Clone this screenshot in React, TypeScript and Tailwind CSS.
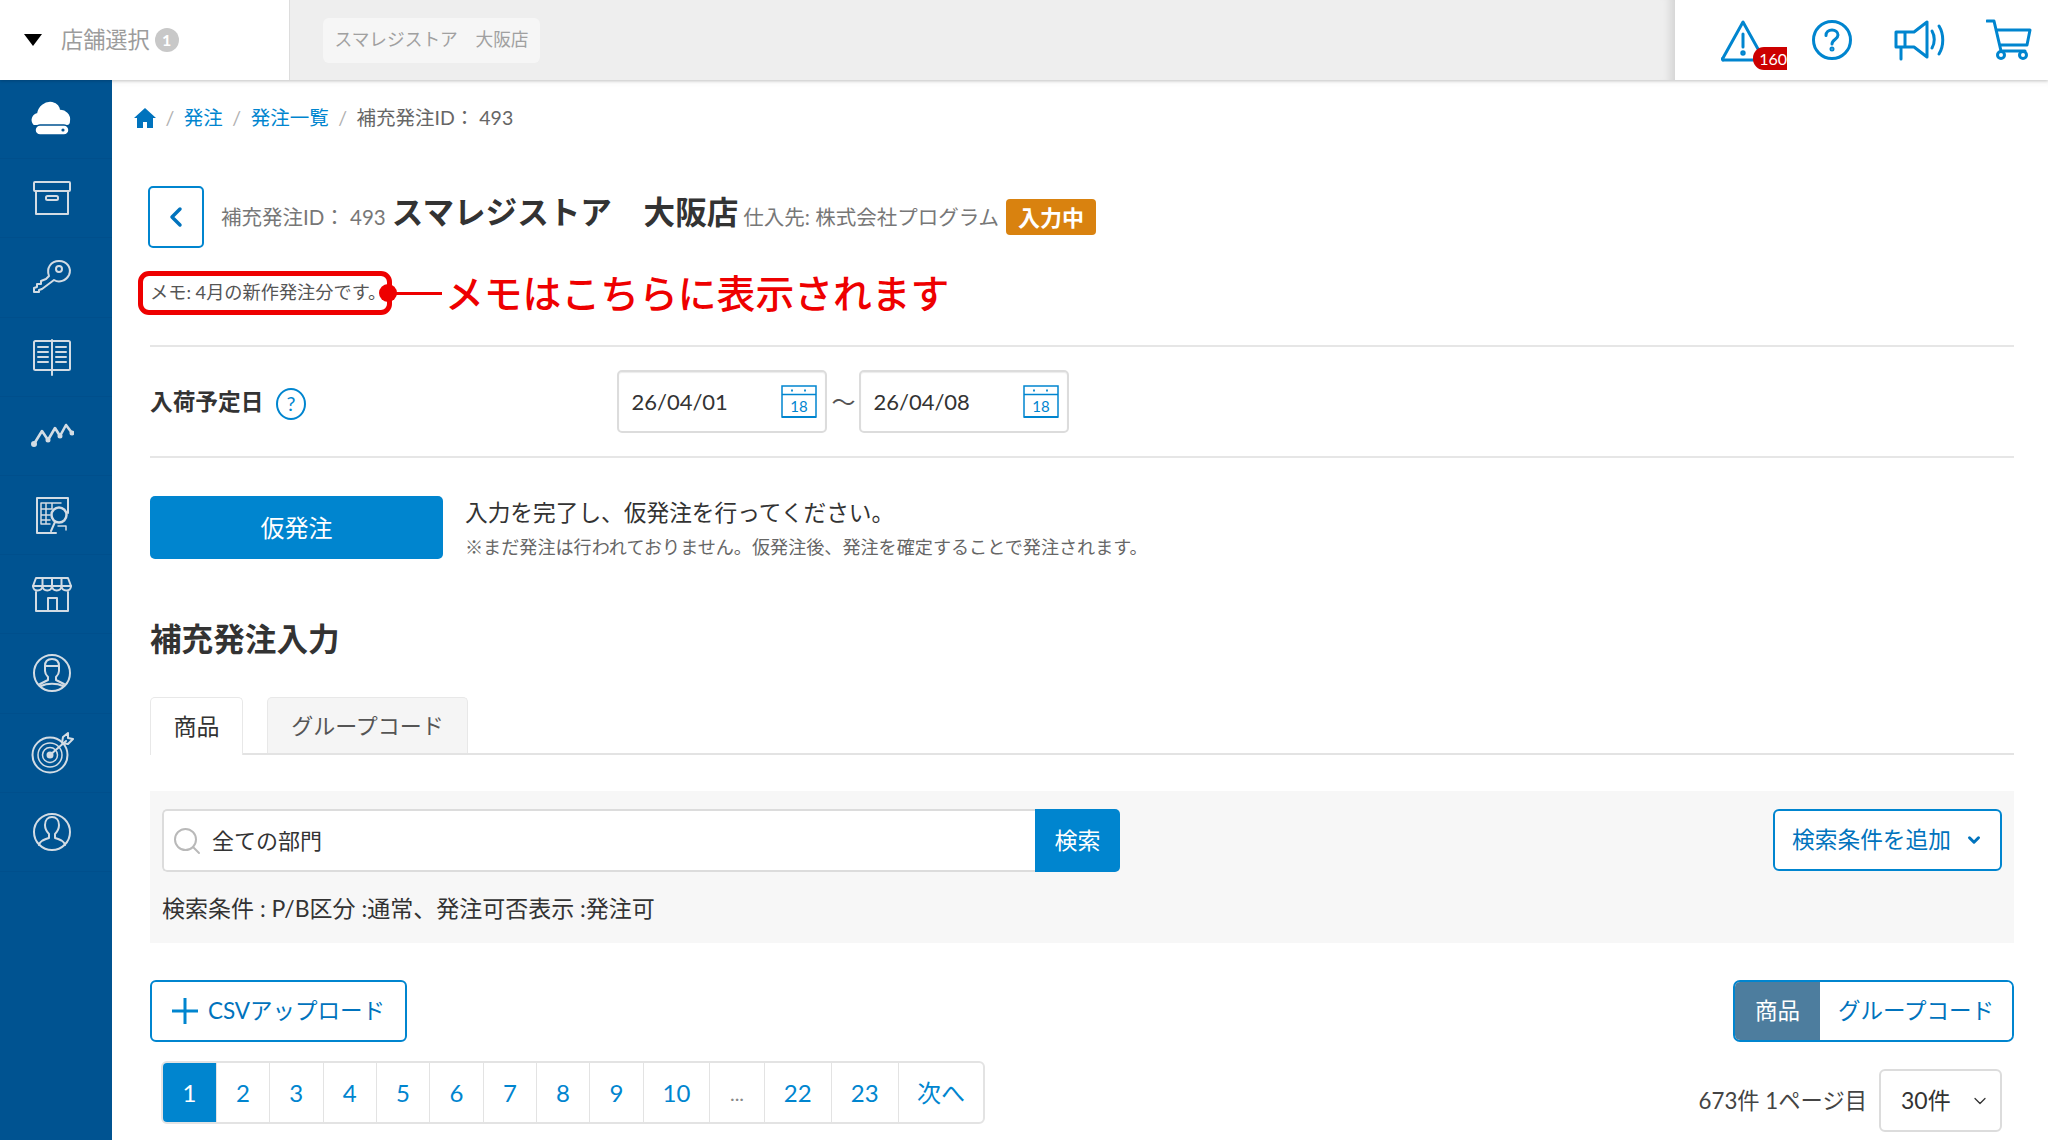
import { ChevronDown } from 'lucide-react'

const FONT = "font-['Lato','Noto_Sans_CJK_JP',sans-serif]"

const NAV_STROKE = '#d3dce4'

function NavIcon({ children }: { children: React.ReactNode }) {
  return (
    <div className="flex h-[79.2px] items-center justify-center border-b border-[#004f8c] pr-[8px]">
      <svg width="44" height="44" viewBox="0 0 44 44" fill="none" stroke={NAV_STROKE} strokeWidth="2" strokeLinejoin="round" strokeLinecap="round">
        {children}
      </svg>
    </div>
  )
}

const NAV_ICONS = [
  <>
    <path d="M4 27c-3-4-1-9 4-10 1-7 7-12 14-11 4 1 7 4 7 8 6-1 11 4 10 10 0 2-1 3-2 3z" fill="#fff" stroke="#fff" />
    <rect x="5" y="28" width="34" height="10" rx="5" fill="#fff" stroke="#005391" strokeWidth="1.5" />
    <circle cx="33" cy="33" r="1.6" fill="#005391" stroke="none" />
  </>,
  <>
    <rect x="4" y="6" width="36" height="9" rx="1" />
    <rect x="6" y="15" width="32" height="23" />
    <rect x="16" y="20" width="12" height="4" rx="1.5" />
  </>,
  <>
    <path d="M19 22c-3-8 2-15 10-15s13 7 10 14c-3 6-10 8-15 5L12 35l-3 1 0 2-5 0 0-4 3-1 0-3 4 0 0-3 5-2z" transform="translate(0 -1)" />
    <circle cx="29" cy="14" r="3" />
  </>,
  <>
    <rect x="4" y="6" width="36" height="29" rx="1.5" />
    <path d="M22 5v35M8 12h10M8 17h10M8 22h10M8 27h10M26 12h10M26 17h10M26 22h10M26 27h10" />
  </>,
  <>
    <path d="M4 30l8-13 6 9 7-12 5 8 6-11 6 8" strokeWidth="2.6" />
    <circle cx="4" cy="30" r="2" fill={NAV_STROKE} />
    <circle cx="18" cy="26" r="1.5" fill={NAV_STROKE} />
    <circle cx="30" cy="22" r="1.5" fill={NAV_STROKE} />
    <circle cx="42" cy="19" r="1.5" fill={NAV_STROKE} />
  </>,
  <>
    <path d="M26 40H7V5h31v15" />
    <path d="M11 10h20M11 10v21h9M16 10v21M22 10v6M11 16h11M11 22h9M11 27h9M28 33h8v4" strokeWidth="1.5" />
    <circle cx="29" cy="22" r="7.5" fill="#005391" strokeWidth="2.5" />
    <path d="M25 29l-4 9" />
  </>,
  <>
    <path d="M6 6h32l3 8H3z" />
    <path d="M3 14c0 6 9 6 9.500 0 .5 6 9 6 9.500 0 .5 6 9 6 9.500 0 .5 6 9.500 6 9.500 0M12.500 6v8M22 6v8M31.500 6v8" />
    <path d="M6 20v19h32V20M18 39V26h9v13" />
  </>,
  <>
    <circle cx="22" cy="22" r="18" />
    <path d="M15 15c0-5 3-7 7-7s7 2 7 7v5c0 3-2 5-3 6v3l8 4M15 15v5c0 3 2 5 3 6v3l-8 4M15 15h14M11 35c6-3 16-3 22 0" />
  </>,
  <>
    <circle cx="20" cy="24" r="17.500" />
    <circle cx="20" cy="24" r="12" strokeWidth="1.500" />
    <circle cx="20" cy="24" r="7.500" strokeWidth="1.500" />
    <circle cx="20" cy="24" r="2.500" fill={NAV_STROKE} />
    <path d="M20 24L36 10M33 6l-1 6 6 1 5-5-5-1 0-5z" />
  </>,
  <>
    <circle cx="22" cy="22" r="18" />
    <path d="M9 35c1-4 4-5 10-7v-4c-2-2-4-5-4-9 0-5 3-8 7-8s7 3 7 8c0 4-2 7-4 9v4c6 2 9 3 10 7" />
  </>,
]

function CalendarIcon() {
  return (
    <svg width="36" height="33" viewBox="0 0 36 33" fill="none" stroke="#0085cf" strokeWidth="1.5">
      <rect x="1" y="1" width="34" height="31" />
      <path d="M1 9.500h34" />
      <path d="M1 32h34" strokeWidth="2" />
      <path d="M11 4.500v2M24 4.500v2" strokeWidth="1.800" />
      <text x="18" y="27" textAnchor="middle" fill="#0085cf" stroke="none" fontSize="15" fontFamily="Lato, sans-serif">18</text>
    </svg>
  )
}

function DateInput({ value }: { value: string }) {
  return (
    <div className="flex h-[63px] w-[210px] items-center justify-between rounded-[5px] border-2 border-[#dcdcdc] bg-white pl-[12px] pr-[8px] text-[22px] text-[#333] shadow-[inset_0_1px_1px_rgba(0,0,0,0.08)]">
      <span>{value}</span>
      <CalendarIcon />
    </div>
  )
}

const PAGES = [
  { label: '1', w: 53, active: true },
  { label: '2', w: 53 },
  { label: '3', w: 53.5 },
  { label: '4', w: 53.5 },
  { label: '5', w: 53 },
  { label: '6', w: 54 },
  { label: '7', w: 53 },
  { label: '8', w: 53 },
  { label: '9', w: 54 },
  { label: '10', w: 66 },
  { label: '...', w: 55, muted: true },
  { label: '22', w: 66.5 },
  { label: '23', w: 67.5 },
  { label: '次へ', w: 85 },
]

export default function App() {
  return (
    <div className={`flex h-[1140px] w-[2048px] flex-col overflow-hidden bg-white text-[#333] ${FONT}`}>
      <header className="relative z-10 flex h-[80px] shrink-0 shadow-[0_1px_3px_rgba(0,0,0,0.2)]">
        <div className="flex w-[290px] items-center border-r border-[#ddd] bg-white pl-[24px]">
          <span className="h-0 w-0 border-x-[9px] border-t-[12px] border-x-transparent border-t-black" />
          <span className="ml-[19px] text-[22.2px] text-[#9c9c9c]">店舗選択</span>
          <span className="ml-[5px] flex h-[24px] w-[24px] items-center justify-center rounded-full bg-[#c8c8c8] text-[16px] font-bold text-white">1</span>
        </div>
        <div className="flex flex-1 items-center bg-[#eeeeee] pl-[33px] shadow-[inset_-12px_0_10px_-8px_rgba(0,0,0,0.12)]">
          <div className="flex h-[45px] w-[217px] items-center justify-center rounded-[6px] bg-[#f6f6f6] text-[17.7px] text-[#a0a0a0]">
            スマレジストア　大阪店
          </div>
        </div>
        <div className="flex w-[373px] items-center bg-white pl-[46px]">
          <div className="relative h-[52px] w-[68px]">
            <svg width="44" height="44" viewBox="0 0 44 44" fill="none" stroke="#0085cf" strokeWidth="3" strokeLinejoin="round" strokeLinecap="round" className="mt-[5px]">
              <path d="M22 3L2 39a1 1 0 0 0 1 2h38a1 1 0 0 0 1-2z" />
              <path d="M22 15v13" />
              <circle cx="22" cy="34" r="1.2" />
            </svg>
            <span className="absolute left-[32px] top-[33px] flex h-[23px] w-[34px] items-center justify-end rounded-l-[11px] bg-[#cc0000] text-[16px] leading-none text-white">160</span>
          </div>
          <svg width="40" height="40" viewBox="0 0 40 40" fill="none" stroke="#0085cf" strokeWidth="3" strokeLinecap="round" className="ml-[23px]">
            <circle cx="20" cy="20" r="18.5" />
            <path d="M14 15.500c0-3.500 2.700-5.500 6-5.500s6 2 6 5c0 4.500-6 4.500-6 9" />
            <circle cx="20" cy="29" r="1" />
          </svg>
          <svg width="54" height="42" viewBox="0 0 54 42" fill="none" stroke="#0085cf" strokeWidth="3" strokeLinejoin="round" strokeLinecap="round" className="ml-[42px]">
            <path d="M2 13h18l13-10v35L20 28H2zM11 13v15M7 28v12" />
            <path d="M38 12c3 5 3 12 0 17M45 7c5 8 5 20 0 28" />
          </svg>
          <svg width="46" height="42" viewBox="0 0 46 42" fill="none" stroke="#0085cf" strokeWidth="3" strokeLinejoin="round" strokeLinecap="round" className="ml-[38px]">
            <path d="M1 2h7l7 30h24M10 11h34l-3 15H14" />
            <circle cx="15" cy="36" r="3.5" />
            <circle cx="37" cy="36" r="3.5" />
          </svg>
        </div>
      </header>

      <div className="flex min-h-0 flex-1">
        <nav className="w-[112px] shrink-0 bg-[#005391]">
          {NAV_ICONS.map((icon, i) => (
            <NavIcon key={i}>{icon}</NavIcon>
          ))}
        </nav>

        <main className="min-w-0 flex-1 pl-[38px] pr-[34px] shadow-[inset_0_8px_8px_-8px_rgba(0,0,0,0.08)]">
          <div className="-ml-[16px] mt-[26px] flex h-[24px] items-center gap-[9.5px] text-[19.5px]">
            <svg width="22" height="20" viewBox="0 0 22 20" fill="#0073bd"><path d="M11 0L0 10h3v10h6v-6h4v6h6V10h3z" /></svg>
            <span className="text-[#b0b0b0]">/</span>
            <span className="text-[#0085cf]">発注</span>
            <span className="text-[#b0b0b0]">/</span>
            <span className="text-[#0085cf]">発注一覧</span>
            <span className="text-[#b0b0b0]">/</span>
            <span className="text-[#666]">補充発注ID： 493</span>
          </div>

          <div className="-ml-[2px] mt-[56px] flex h-[62px] items-center">
            <button className="flex h-[62px] w-[56px] items-center justify-center rounded-[5px] border-2 border-[#0085cf] bg-white text-[#0073bd]">
              <svg width="14" height="22" viewBox="0 0 14 22" fill="none" stroke="currentColor" strokeWidth="3.5" strokeLinecap="round" strokeLinejoin="round"><path d="M11 3L3 11l8 8" /></svg>
            </button>
            <span className="ml-[17px] text-[20.5px] text-[#777]">補充発注ID： 493</span>
            <span className="-mt-[8px] ml-[6px] text-[31.6px] font-bold text-[#333]">スマレジストア　大阪店</span>
            <span className="ml-[5px] text-[20.5px] text-[#777]">仕入先: 株式会社プログラム</span>
            <span className="ml-[7px] flex h-[36px] w-[90px] items-center justify-center rounded-[4px] bg-[#d9820f] text-[22px] font-bold text-white">入力中</span>
          </div>

          <div className="relative -ml-[12px] mt-[23px] flex h-[44px] items-center">
            <div className="flex h-[44px] w-[254px] items-center rounded-[11px] border-[5px] border-[#ee0000] pl-[7px] text-[18.2px] text-[#555]">
              <span className="whitespace-nowrap">メモ: 4月の新作発注分です。</span>
            </div>
            <span className="absolute left-[241px] top-[13px] h-[18px] w-[18px] rounded-full bg-[#ee0000]" />
            <span className="h-[3px] w-[50px] bg-[#ee0000]" />
            <span className="ml-[3px] text-[38.8px] font-medium leading-none text-[#ee0000]">メモはこちらに表示されます</span>
          </div>

          <div className="mt-[30px] flex h-[113px] items-center border-y-2 border-[#e6e6e6]">
            <span className="mt-[1px] text-[22.7px] font-bold text-[#333]">入荷予定日</span>
            <svg width="30" height="32" viewBox="0 0 30 32" fill="none" stroke="#0085cf" strokeWidth="2" className="ml-[13px] mt-[4px]">
              <ellipse cx="15" cy="16" rx="14" ry="15" />
              <text x="15" y="23" textAnchor="middle" fill="#0085cf" stroke="none" fontSize="20" fontFamily="Lato, sans-serif">?</text>
            </svg>
            <div className="ml-[311px] flex items-center gap-[4px]">
              <DateInput value="26/04/01" />
              <span className="w-[24px] text-center text-[24px] text-[#555]">～</span>
              <DateInput value="26/04/08" />
            </div>
          </div>

          <div className="mt-[38px] flex items-center">
            <button className="h-[63px] w-[293px] rounded-[5px] bg-[#0085cf] text-[24px] text-white">仮発注</button>
            <div className="ml-[22px] mt-[2px]">
              <p className="text-[22.7px] leading-[30px] text-[#333]">入力を完了し、仮発注を行ってください。</p>
              <p className="mt-[7px] text-[18.1px] leading-[24px] text-[#666]">※まだ発注は行われておりません。仮発注後、発注を確定することで発注されます。</p>
            </div>
          </div>

          <h2 className="mt-[58px] text-[31.6px] font-bold leading-[44px] text-[#333]">補充発注入力</h2>

          <div className="mt-[36px] flex h-[58px] items-end gap-[24px] border-b-2 border-[#e3e3e3]">
            <div className="-mb-[2px] flex h-[58px] w-[93px] items-center justify-center rounded-t-[5px] border-x border-t border-[#e8e8e8] bg-white text-[23px]">商品</div>
            <div className="flex h-[56px] w-[201px] items-center justify-center rounded-t-[5px] border-x border-t border-[#e8e8e8] bg-[#f5f5f5] text-[22px] text-[#555]">グループコード</div>
          </div>

          <section className="mt-[36px] h-[152px] bg-[#f7f7f7] px-[12px] pt-[18px]">
            <div className="flex items-start justify-between">
              <div className="flex h-[63px] w-[958px] overflow-hidden rounded-[5px]">
                <div className="flex flex-1 items-center rounded-l-[5px] border-2 border-r-0 border-[#dcdcdc] bg-white pl-[9px] text-[22px]">
                  <svg width="28" height="28" viewBox="0 0 28 28" fill="none" stroke="#b9b9b9" strokeWidth="2" strokeLinecap="round"><circle cx="12.5" cy="12.5" r="10.5" /><path d="M20 20l6 6" /></svg>
                  <span className="ml-[11px]">全ての部門</span>
                </div>
                <button className="w-[85px] bg-[#0085cf] text-[23px] text-white">検索</button>
              </div>
              <button className="flex h-[62px] w-[229px] items-center justify-center gap-[14px] rounded-[6px] border-2 border-[#0085cf] bg-white text-[22.7px] text-[#0073bd]">
                検索条件を追加
                <ChevronDown size={18} strokeWidth={4} />
              </button>
            </div>
            <p className="mt-[21px] text-[23px] leading-[30px] text-[#333]">検索条件 : P/B区分 :通常、発注可否表示 :発注可</p>
          </section>

          <div className="mt-[37px] flex justify-between">
            <button className="flex h-[62px] w-[257px] items-center justify-center gap-[10px] rounded-[6px] border-2 border-[#0085cf] bg-white text-[22.5px] text-[#0073bd]">
              <svg width="26" height="26" viewBox="0 0 26 26" stroke="#0085cf" strokeWidth="3"><path d="M13 0v26M0 13h26" /></svg>
              CSVアップロード
            </button>
            <div className="flex h-[62px] w-[281px] overflow-hidden rounded-[7px] border-2 border-[#0085cf] text-[22.5px]">
              <div className="flex w-[85px] items-center justify-center bg-[#4d7d9e] text-white">商品</div>
              <div className="flex flex-1 items-center justify-center bg-white text-[#0073bd]">グループコード</div>
            </div>
          </div>

          <div className="mt-[19px] flex items-start justify-between pl-[11px] pr-[12px]">
            <div className="flex h-[63px] overflow-hidden rounded-[6px] border-2 border-[#e3e3e3]">
              {PAGES.map((p) => (
                <span
                  key={p.label}
                  style={{ width: p.w }}
                  className={
                    p.active
                      ? 'flex items-center justify-center bg-[#0085cf] text-[24px] text-white'
                      : p.muted
                        ? 'flex items-center justify-center border-l border-[#e3e3e3] text-[20px] text-[#888]'
                        : 'flex items-center justify-center border-l border-[#e3e3e3] text-[24px] text-[#0085cf]'
                  }
                >
                  {p.label}
                </span>
              ))}
            </div>
            <div className="mt-[8px] flex items-center">
              <span className="text-[22.3px] text-[#444]">673件 1ページ目</span>
              <div className="ml-[12px] flex h-[63px] w-[123px] items-center justify-between rounded-[6px] border-2 border-[#dcdcdc] bg-white pl-[20px] pr-[10px] text-[23px]">
                30件
                <ChevronDown size={20} strokeWidth={1.5} />
              </div>
            </div>
          </div>
        </main>
      </div>
    </div>
  )
}
